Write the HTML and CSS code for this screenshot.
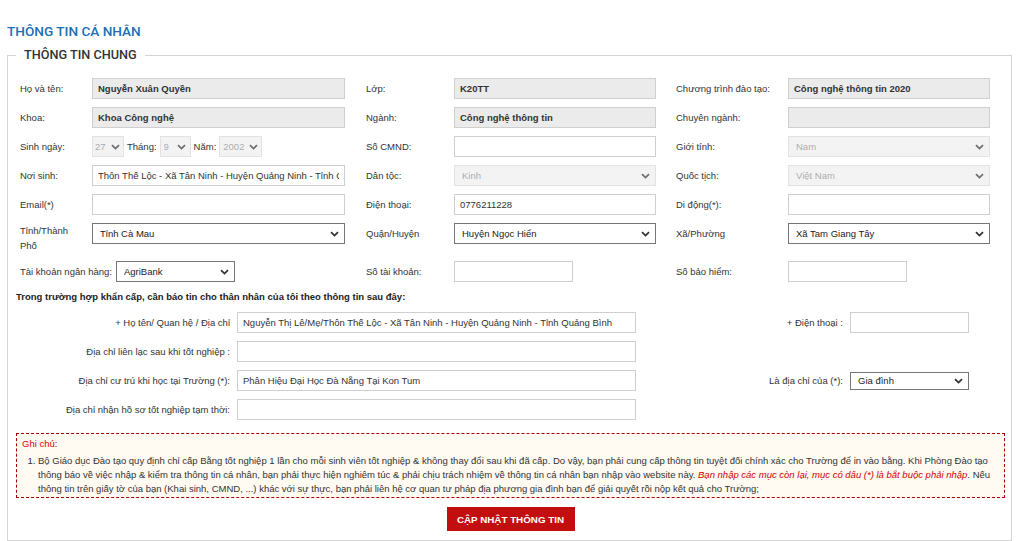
FILE: index.html
```html
<!DOCTYPE html>
<html lang="vi">
<head>
<meta charset="utf-8">
<title>Thông tin cá nhân</title>
<link rel="stylesheet" href="styles.css">
</head>
<body>
<div class="page">
  <h1 class="title">THÔNG TIN CÁ NHÂN</h1>
  <fieldset class="box">
    <legend class="legend">THÔNG TIN CHUNG</legend>
    <div class="body">
      <div class="grid">
        <label class="lbl">Họ và tên:</label>
        <div class="cell"><input class="inp ro w253" value="Nguyễn Xuân Quyền" readonly></div>
        <label class="lbl">Lớp:</label>
        <div class="cell"><input class="inp ro w202" value="K20TT" readonly></div>
        <label class="lbl">Chương trình đào tạo:</label>
        <div class="cell"><input class="inp ro w202" value="Công nghệ thông tin 2020" readonly></div>

        <label class="lbl">Khoa:</label>
        <div class="cell"><input class="inp ro w253" value="Khoa Công nghệ" readonly></div>
        <label class="lbl">Ngành:</label>
        <div class="cell"><input class="inp ro w202" value="Công nghệ thông tin" readonly></div>
        <label class="lbl">Chuyên ngành:</label>
        <div class="cell"><input class="inp ro w202" value="" readonly></div>

        <label class="lbl">Sinh ngày:</label>
        <div class="cell dob">
          <select class="sel dis w-day" disabled><option>27</option></select>
          <span class="sub">Tháng:</span>
          <select class="sel dis w-mon" disabled><option>9</option></select>
          <span class="sub">Năm:</span>
          <select class="sel dis w-year" disabled><option>2002</option></select>
        </div>
        <label class="lbl">Số CMND:</label>
        <div class="cell"><input class="inp w202" value=""></div>
        <label class="lbl">Giới tính:</label>
        <div class="cell"><select class="sel dis w202" disabled><option>Nam</option></select></div>

        <label class="lbl">Nơi sinh:</label>
        <div class="cell"><input class="inp w253" value="Thôn Thế Lộc - Xã Tân Ninh - Huyện Quảng Ninh - Tỉnh Quảng Bình"></div>
        <label class="lbl">Dân tộc:</label>
        <div class="cell"><select class="sel dis w202" disabled><option>Kinh</option></select></div>
        <label class="lbl">Quốc tịch:</label>
        <div class="cell"><select class="sel dis w202" disabled><option>Việt Nam</option></select></div>

        <label class="lbl">Email(*)</label>
        <div class="cell"><input class="inp w253" value=""></div>
        <label class="lbl">Điện thoại:</label>
        <div class="cell"><input class="inp w202" value="0776211228"></div>
        <label class="lbl">Di động(*):</label>
        <div class="cell"><input class="inp w202" value=""></div>

        <label class="lbl two">Tỉnh/Thành Phố</label>
        <div class="cell"><select class="sel w253"><option>Tỉnh Cà Mau</option></select></div>
        <label class="lbl">Quận/Huyện</label>
        <div class="cell"><select class="sel w202"><option>Huyện Ngọc Hiển</option></select></div>
        <label class="lbl">Xã/Phường</label>
        <div class="cell"><select class="sel w202"><option>Xã Tam Giang Tây</option></select></div>

        <div class="span2 bank">
          <label class="lbl">Tài khoản ngân hàng:</label>
          <select class="sel w119"><option>AgriBank</option></select>
        </div>
        <label class="lbl">Số tài khoản:</label>
        <div class="cell"><input class="inp w119" value=""></div>
        <label class="lbl">Số bảo hiểm:</label>
        <div class="cell"><input class="inp w119" value=""></div>
      </div>

      <p class="emerg-title">Trong trường hợp khẩn cấp, cần báo tin cho thân nhân của tôi theo thông tin sau đây:</p>

      <div class="egrid">
        <label class="rl">+ Họ tên/ Quan hệ / Địa chỉ</label>
        <div class="cell"><input class="inp w399" value="Nguyễn Thị Lê/Mẹ/Thôn Thế Lộc - Xã Tân Ninh - Huyện Quảng Ninh - Tỉnh Quảng Bình"></div>
        <label class="rl">+ Điện thoại :</label>
        <div class="cell"><input class="inp w119" value=""></div>

        <label class="rl">Địa chỉ liên lạc sau khi tốt nghiệp :</label>
        <div class="cell"><input class="inp w399" value=""></div>
        <div></div>
        <div></div>

        <label class="rl">Địa chỉ cư trú khi học tại Trường (*):</label>
        <div class="cell"><input class="inp w399" value="Phân Hiệu Đại Học Đà Nẵng Tại Kon Tum"></div>
        <label class="rl">Là địa chỉ của (*):</label>
        <div class="cell"><select class="sel w119 short"><option>Gia đình</option></select></div>

        <label class="rl">Địa chỉ nhận hồ sơ tốt nghiệp tạm thời:</label>
        <div class="cell"><input class="inp w399" value=""></div>
        <div></div>
        <div></div>
      </div>

      <div class="note">
        <div class="note-title">Ghi chú:</div>
        <ol class="note-list">
          <li>Bộ Giáo dục Đào tạo quy định chỉ cấp Bằng tốt nghiệp 1 lần cho mỗi sinh viên tốt nghiệp &amp; không thay đổi sau khi đã cấp. Do vậy, bạn phải cung cấp thông tin tuyệt đối chính xác cho Trường để in vào bằng. Khi Phòng Đào tạo thông báo về việc nhập &amp; kiểm tra thông tin cá nhân, bạn phải thực hiện nghiêm túc &amp; phải chịu trách nhiệm về thông tin cá nhân bạn nhập vào website này. <em class="warn">Bạn nhập các mục còn lại, mục có dấu (*) là bắt buộc phải nhập</em>. Nếu thông tin trên giấy tờ của bạn (Khai sinh, CMND, ...) khác với sự thực, bạn phải liên hệ cơ quan tư pháp địa phương gia đình bạn để giải quyết rồi nộp kết quả cho Trường;</li>
        </ol>
      </div>

      <div class="actions">
        <button class="btn" type="button">CẬP NHẬT THÔNG TIN</button>
      </div>
    </div>
  </fieldset>
</div>
</body>
</html>
```
FILE: styles.css
```css
* { box-sizing: border-box; }
html, body { margin: 0; padding: 0; background: #fff; }
body {
  font-family: "Liberation Sans", Arial, sans-serif;
  font-size: 9.5px;
  color: #333;
}
.page {
  padding: 21px 12px 0 7px;
}
.title {
  margin: 0 0 6px 0;
  font-family: Roboto, "Liberation Sans", Arial, sans-serif;
  font-weight: 500;
  font-size: 13.6px;
  line-height: 20px;
  color: #1a6fb8;
}
.box {
  margin: 0;
  padding: 0;
  border: 1px solid #d4d4d4;
  min-width: 0;
}
.legend {
  margin-left: 8px;
  padding: 0 8px;
  font-family: Roboto, "Liberation Sans", Arial, sans-serif;
  font-weight: 500;
  font-size: 12.7px;
  line-height: 16px;
  color: #333;
}
.body {
  padding: 15px 6px 9px 8px;
}
.grid {
  display: grid;
  grid-template-columns: 72px 274px 88px 222px 112px 202px;
  row-gap: 8px;
  align-items: start;
  padding-left: 4px;
}
.lbl {
  line-height: 21px;
  white-space: nowrap;
}
.lbl.two {
  white-space: normal;
  width: 58px;
  line-height: 15px;
}
.cell { display: flex; align-items: center; min-height: 21px; }
.span2 { grid-column: span 2; }
.bank { display: flex; align-items: center; gap: 4px; }

.inp {
  height: 21px;
  border: 1px solid #cfcfcf;
  background: #fff;
  font: inherit;
  color: #333;
  padding: 0 5px;
  margin: 0;
  border-radius: 0;
  outline: none;
}
.inp.ro {
  background: #ebebeb;
  font-weight: bold;
}
.sel {
  -webkit-appearance: none;
  appearance: none;
  height: 21px;
  font: inherit;
  color: #222;
  border: 1px solid #767676;
  background-color: #fff;
  background-image: url("data:image/svg+xml,%3Csvg xmlns='http://www.w3.org/2000/svg' width='9' height='6' viewBox='0 0 9 6'%3E%3Cpath d='M1 1.2l3.5 3.4L8 1.2' fill='none' stroke='%23333' stroke-width='1.8'/%3E%3C/svg%3E");
  background-repeat: no-repeat;
  background-position: right 5px center;
  background-size: 9px 6px;
  border-radius: 0;
  padding: 0 16px 0 7px;
  margin: 0;
}
.sel.dis {
  border-color: #d6d6d6;
  background-color: #efefef;
  color: #8a8a8a;
}
.sel.short { height: 18px; }
.w253 { width: 253px; }
.w202 { width: 202px; }
.w119 { width: 119px; }
.w399 { width: 399px; }
.dob { gap: 3px; }
.sub { color: #333; }
.w-day { width: 32px; padding-left: 2px; padding-right: 0; background-position: right 3px center; }
.w-mon { width: 31px; padding-left: 3px; padding-right: 0; background-position: right 4px center; }
.w-year { width: 43px; padding-left: 3px; padding-right: 0; background-position: right 3px center; }

.emerg-title {
  margin: 8px 0 8px 0;
  font-weight: bold;
  line-height: 14px;
  color: #222;
}
.egrid {
  display: grid;
  grid-template-columns: 221px 399px 214px 119px;
  row-gap: 8px;
  align-items: center;
}
.rl {
  text-align: right;
  padding-right: 7px;
  line-height: 21px;
  white-space: nowrap;
}

.note {
  margin-top: 13px;
  border: 1px dashed #a40000;
  background: #fffaf2;
  padding: 3px 5px 1px 5px;
  line-height: 14px;
}
.note-title {
  color: #e00000;
}
.note-list {
  margin: 3px 0 0 0;
  padding-left: 16px;
}
.warn {
  color: #d00000;
}
.actions {
  display: flex;
  justify-content: center;
  margin-top: 9px;
}
.btn {
  height: 24px;
  width: 128px;
  padding: 0;
  border: none;
  background: #c20e0e;
  color: #fff;
  font-family: "Liberation Sans", Arial, sans-serif;
  font-weight: bold;
  font-size: 9.8px;
  cursor: pointer;
}
```
